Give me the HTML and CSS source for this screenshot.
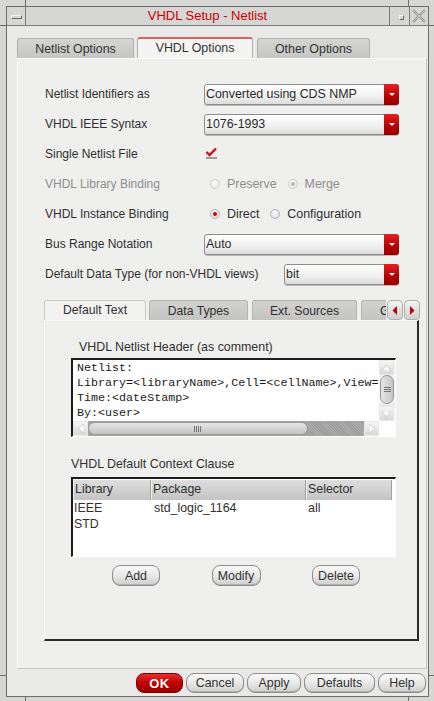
FILE: index.html
```html
<!DOCTYPE html>
<html>
<head>
<meta charset="utf-8">
<link rel="stylesheet" href="styles.css">
</head>
<body>
<div class="ticks">
  <span class="tick tv t-top1"></span><span class="tick tv t-top2"></span>
  <span class="tick tv t-bot1"></span><span class="tick tv t-bot2"></span>
  <span class="tick th2 t-left1"></span><span class="tick th2 t-left2"></span>
  <span class="tick th2 t-right1"></span><span class="tick th2 t-right2"></span>
</div>
<div class="window">
  <div class="titlebar">
    <div class="tb-btn tb-menu"><span class="menu-glyph"></span></div>
    <div class="tb-title">VHDL Setup - Netlist</div>
    <div class="tb-btn tb-max"><span class="max-glyph"></span></div>
    <div class="tb-btn tb-close">
      <svg width="14" height="14" viewBox="0 0 14 14"><path d="M1 1 L13 13 M13 1 L1 13" stroke="#8a8a8a" stroke-width="2.2" fill="none"/><path d="M1 1 L13 13 M13 1 L1 13" stroke="#e4e4e4" stroke-width="0.8" fill="none"/></svg>
    </div>
  </div>
  <div class="content">
    <div class="tabs">
      <div class="tab t1">Netlist Options</div>
      <div class="tab t2 active">VHDL Options</div>
      <div class="tab t3">Other Options</div>
    </div>
    <div class="panel">
      <div class="row">
        <span class="label">Netlist Identifiers as</span>
        <div class="combo"><span class="combo-text">Converted using CDS NMP</span><span class="combo-arrow"></span></div>
      </div>
      <div class="row">
        <span class="label">VHDL IEEE Syntax</span>
        <div class="combo"><span class="combo-text">1076-1993</span><span class="combo-arrow"></span></div>
      </div>
      <div class="row">
        <span class="label lbl-fixed">Single Netlist File</span>
        <svg class="check" width="14" height="12" viewBox="0 0 14 12"><path d="M1.5 5 L4.5 8 L11 1.5" stroke="#d01010" stroke-width="2.4" fill="none"/><path d="M1 11 H12" stroke="#777" stroke-width="1.4"/></svg>
      </div>
      <div class="row">
        <span class="label lbl-fixed disabled">VHDL Library Binding</span>
        <div class="radios">
          <span class="radio dis"></span><span class="rlabel disabled">Preserve</span>
          <span class="radio dis on-dis"></span><span class="rlabel disabled">Merge</span>
        </div>
      </div>
      <div class="row">
        <span class="label lbl-fixed">VHDL Instance Binding</span>
        <div class="radios">
          <span class="radio on"></span><span class="rlabel">Direct</span>
          <span class="radio"></span><span class="rlabel">Configuration</span>
        </div>
      </div>
      <div class="row">
        <span class="label">Bus Range Notation</span>
        <div class="combo"><span class="combo-text">Auto</span><span class="combo-arrow"></span></div>
      </div>
      <div class="row">
        <span class="label">Default Data Type (for non-VHDL views)</span>
        <div class="combo short"><span class="combo-text">bit</span><span class="combo-arrow"></span></div>
      </div>

      <div class="subtabs">
        <div class="subtab-strip">
          <div class="subtab s1 active">Default Text</div>
          <div class="subtab s2">Data Types</div>
          <div class="subtab s3">Ext. Sources</div>
          <div class="subtab s4">Generics</div>
        </div>
        <div class="tab-arrow"><svg width="6" height="9" viewBox="0 0 6 9"><path d="M5 0 L0.5 4.5 L5 9 Z" fill="#c80000"/></svg></div>
        <div class="tab-arrow"><svg width="6" height="9" viewBox="0 0 6 9"><path d="M1 0 L5.5 4.5 L1 9 Z" fill="#c80000"/></svg></div>
      </div>
      <div class="subpanel">
        <div class="sub-label indent">VHDL Netlist Header (as comment)</div>
        <div class="textarea">
          <div class="ta-text">Netlist:
Library=&lt;libraryName&gt;,Cell=&lt;cellName&gt;,View=&lt;viewName&gt;
Time:&lt;dateStamp&gt;
By:&lt;user&gt;</div>
          <div class="vscroll">
            <div class="sb-btn"><svg width="9" height="6" viewBox="0 0 9 6"><path d="M0 6 L4.5 0 L9 6 Z" fill="#fff" stroke="#bbb" stroke-width="0.6"/></svg></div>
            <div class="vthumb"><span class="grip-h"></span></div>
            <div class="vtrough"></div>
            <div class="sb-btn"><svg width="9" height="6" viewBox="0 0 9 6"><path d="M0 0 L4.5 6 L9 0 Z" fill="#fff" stroke="#bbb" stroke-width="0.6"/></svg></div>
          </div>
          <div class="hscroll">
            <div class="sb-btn"><svg width="6" height="9" viewBox="0 0 6 9"><path d="M6 0 L0 4.5 L6 9 Z" fill="#fff" stroke="#bbb" stroke-width="0.6"/></svg></div>
            <div class="hthumb"><span class="grip-v"></span></div>
            <div class="htrough"></div>
            <div class="sb-btn"><svg width="6" height="9" viewBox="0 0 6 9"><path d="M0 0 L6 4.5 L0 9 Z" fill="#fff" stroke="#bbb" stroke-width="0.6"/></svg></div>
          </div>
          <div class="corner"></div>
        </div>
        <div class="sub-label second">VHDL Default Context Clause</div>
        <div class="table">
          <div class="thead">
            <div class="th c1">Library</div>
            <div class="th c2">Package</div>
            <div class="th c3">Selector</div>
            <div class="th c4"></div>
          </div>
          <div class="tr"><div class="td c1">IEEE</div><div class="td c2">std_logic_1164</div><div class="td c3">all</div></div>
          <div class="tr"><div class="td c1">STD</div><div class="td c2"></div><div class="td c3"></div></div>
        </div>
        <div class="tbl-buttons">
          <div class="cell"><button class="btn b-add">Add</button></div>
          <div class="cell"><button class="btn b-mod">Modify</button></div>
          <div class="cell"><button class="btn b-del">Delete</button></div>
        </div>
      </div>
    </div>
    <div class="actions">
      <button class="btn ok">OK</button>
      <button class="btn a-cancel">Cancel</button>
      <button class="btn a-apply">Apply</button>
      <button class="btn a-def">Defaults</button>
      <button class="btn a-help">Help</button>
    </div>
  </div>
</div>
</body>
</html>
```
FILE: styles.css
```css
html, body {
  margin: 0;
  padding: 0;
}
body {
  position: relative;
  width: 434px;
  height: 701px;
  background: #d6d6d4;
  font-family: "Liberation Sans", Arial, sans-serif;
  font-size: 12px;
  color: #303030;
  overflow: hidden;
}
.ticks .tick {
  position: absolute;
  background: #6c6c6c;
}
.tv { width: 1px; height: 6px; }
.th2 { width: 6px; height: 1px; }
.t-top1 { left: 25px; top: 0; }
.t-top2 { left: 408px; top: 0; }
.t-bot1 { left: 25px; top: 696px; }
.t-bot2 { left: 408px; top: 696px; }
.t-left1 { left: 0; top: 25px; }
.t-left2 { left: 0; top: 675px; }
.t-right1 { left: 428px; top: 25px; }
.t-right2 { left: 428px; top: 675px; }
.window {
  margin: 6px 0 0 6px;
  width: 423px;
  height: 691px;
  box-sizing: border-box;
  border: 1px solid #6c6c6c;
  background: #e9e9e7;
}
.titlebar {
  display: flex;
  height: 19px;
  box-sizing: border-box;
  border-bottom: 1px solid #7c7c7c;
  background: #d6d6d4;
}
.tb-btn {
  width: 18px;
  display: flex;
  align-items: center;
  justify-content: center;
}
.tb-menu { border-right: 1px solid #7c7c7c; }
.tb-max { border-left: 1px solid #7c7c7c; border-right: 1px solid #7c7c7c; width: 19px; }
.menu-glyph {
  width: 9px;
  height: 2px;
  border: 1px solid #f4f4f4;
  border-right-color: #6a6a6a;
  border-bottom-color: #6a6a6a;
  margin-top: 1px;
}
.max-glyph {
  width: 3px;
  height: 3px;
  border: 1px solid #f4f4f4;
  border-right-color: #6a6a6a;
  border-bottom-color: #6a6a6a;
  margin-top: 2px;
  margin-left: 3px;
}
.tb-title {
  flex: 1;
  text-align: center;
  color: #cc0000;
  font-size: 13px;
  line-height: 18px;
}
.content {
  padding: 11px 0 0 10px;
}
.tabs {
  display: flex;
  align-items: flex-end;
  height: 21px;
}
.tab {
  height: 20px;
  box-sizing: border-box;
  border: 1px solid #b0b0ae;
  border-bottom: none;
  border-radius: 3px 3px 0 0;
  background: linear-gradient(#d4d4d2, #c6c6c4);
  text-align: center;
  line-height: 20px;
  font-size: 12.4px;
  color: #333;
}
.t1 { width: 117px; }
.t2 { width: 116px; margin-left: 3px; }
.t3 { width: 113px; margin-left: 4px; }
.tab.active {
  height: 21px;
  background: #f4f4f2;
  border-top: 2px solid #e06060;
  line-height: 18px;
}
.panel {
  box-sizing: border-box;
  width: 410px;
  height: 611px;
  border: 1px solid #fafafa;
  border-right-color: #c8c8c6;
  border-bottom-color: #c8c8c6;
  background: #efefed;
  padding: 20px 27px 0 27px;
}
.row {
  height: 30px;
  display: flex;
  align-items: center;
  justify-content: space-between;
}
.label { white-space: nowrap; }
.lbl-fixed { width: 160px; }
.row .check { margin-right: auto; margin-top: -2px; }
.disabled { color: #8e8e8e; }
.combo {
  width: 195px;
  height: 21px;
  box-sizing: border-box;
  border: 1px solid #8c8c8c;
  border-radius: 3px;
  background: linear-gradient(#ffffff, #f0f0f0 60%, #dcdcdc);
  box-shadow: 0 1px 0 #b8b8b8;
  display: flex;
  align-items: center;
}
.combo.short { width: 115px; }
.combo-text {
  flex: 1;
  padding-left: 1px;
  font-size: 12.4px;
  color: #2a2a2a;
  margin-top: -1px;
}
.combo-arrow {
  width: 15px;
  height: 21px;
  margin: -1px -1px -1px 0;
  border-radius: 0 3px 3px 0;
  background: linear-gradient(#e42222, #b40000 60%, #960000);
  position: relative;
}
.combo-arrow::after {
  content: "";
  position: absolute;
  left: 5px;
  top: 9px;
  border-left: 3px solid transparent;
  border-right: 3px solid transparent;
  border-top: 3px solid #ffffff;
}
.radios {
  margin-right: auto;
  display: flex;
  align-items: center;
  margin-left: 5px;
}
.radio {
  width: 10px;
  height: 10px;
  box-sizing: border-box;
  border-radius: 50%;
  border: 1px solid #b4b4b4;
  background: radial-gradient(circle at 40% 35%, #ffffff, #d4d4d4);
  position: relative;
}
.radio.on::after, .radio.on-dis::after {
  content: "";
  position: absolute;
  left: 2px;
  top: 2px;
  width: 4px;
  height: 4px;
  border-radius: 50%;
  background: #d00000;
}
.radio.on-dis::after { background: #b6b6b6; }
.radio.dis { border-color: #d0d0d0; background: radial-gradient(circle at 40% 35%, #fbfbfb, #e4e4e4); }
.rlabel { margin-left: 7px; margin-right: 11px; font-size: 12.4px; }
.subtabs {
  margin-top: 11px;
  margin-left: -1px;
  width: 376px;
  height: 20px;
  display: flex;
  position: relative;
}
.subtab-strip {
  width: 343px;
  display: flex;
  overflow: hidden;
}
.subtab {
  flex: none;
  height: 20px;
  box-sizing: border-box;
  border: 1px solid #b4b4b2;
  border-bottom: none;
  border-radius: 3px 3px 0 0;
  background: linear-gradient(#d2d2d0, #c4c4c2);
  text-align: center;
  line-height: 20px;
  font-size: 12.2px;
}
.subtab.active { background: #f2f2f0; line-height: 18px; border-color: #c8c8c6; }
.s1 { width: 102px; }
.s2 { width: 99px; margin-left: 3px; }
.s3 { width: 105px; margin-left: 4px; }
.s4 { width: 80px; margin-left: 4px; text-align: left; padding-left: 18px; }
.tab-arrow {
  width: 16px;
  height: 20px;
  margin-left: 1px;
  box-sizing: border-box;
  border: 1px solid #b0b0b0;
  border-radius: 4px;
  background: linear-gradient(#f4f4f4, #d0d0d0);
  display: flex;
  align-items: center;
  justify-content: center;
}
.subpanel {
  margin-left: -1px;
  width: 375px;
  height: 321px;
  box-sizing: border-box;
  border: 1px solid #fafafa;
  border-right: 2px solid #2a2a2a;
  border-bottom: 2px solid #2a2a2a;
  background: #efefed;
  padding: 18px 20px 0 26px;
}
.sub-label { line-height: 16px; font-size: 12.4px; }
.sub-label.indent { padding-left: 8px; }
.sub-label.second { margin-top: 19px; }
.textarea {
  margin-top: 3px;
  width: 325px;
  height: 79px;
  box-sizing: border-box;
  border-top: 2px solid #1c1c1c;
  border-left: 2px solid #1c1c1c;
  border-right: 1px solid #ffffff;
  border-bottom: 1px solid #ffffff;
  background: #ffffff;
  display: grid;
  grid-template-columns: 1fr 16px;
  grid-template-rows: 1fr 15px;
}
.ta-text {
  font-family: "Liberation Mono", "Courier New", monospace;
  font-size: 11.7px;
  line-height: 15px;
  white-space: pre;
  overflow: hidden;
  padding: 1px 0 0 4px;
  color: #1a1a1a;
}
.vscroll {
  display: flex;
  flex-direction: column;
  background: #f0f0f0;
}
.sb-btn {
  width: 15px;
  height: 15px;
  flex: none;
  box-sizing: border-box;
  background: linear-gradient(#f6f6f6, #d8d8d8);
  border: 1px solid #e8e8e8;
  display: flex;
  align-items: center;
  justify-content: center;
}
.vthumb {
  height: 27px;
  margin: 0 1px;
  border-radius: 7px;
  border: 1px solid #9a9a9a;
  background: linear-gradient(90deg, #e6e6e6, #c4c4c4);
  display: flex;
  align-items: center;
  justify-content: center;
}
.grip-h {
  width: 7px;
  height: 6px;
  background: repeating-linear-gradient(#777 0 1px, transparent 1px 2px);
}
.vtrough { flex: 1; background: #eaeaea; }
.hscroll {
  display: flex;
  align-items: stretch;
  background: #a4a4a4;
}
.hthumb {
  width: 218px;
  margin: 1px 0;
  border-radius: 7px;
  border: 1px solid #9a9a9a;
  background: linear-gradient(#e6e6e6, #c4c4c4);
  display: flex;
  align-items: center;
  justify-content: center;
}
.grip-v {
  width: 8px;
  height: 6px;
  background: repeating-linear-gradient(90deg, #777 0 1px, transparent 1px 2px);
}
.htrough { flex: 1; background: repeating-linear-gradient(45deg, #9c9c9c 0 1px, #acacac 1px 2px); }
.corner { background: #ffffff; }
.table {
  margin-top: 5px;
  width: 325px;
  height: 80px;
  box-sizing: border-box;
  border-top: 2px solid #1c1c1c;
  border-left: 2px solid #1c1c1c;
  border-right: 1px solid #ffffff;
  border-bottom: 1px solid #ffffff;
  background: #ffffff;
  padding-top: 1px;
}
.thead {
  display: flex;
  height: 20px;
}
.th {
  box-sizing: border-box;
  background: linear-gradient(#dedede, #c4c4c4);
  border-right: 1px solid #a0a0a0;
  border-left: 1px solid #f0f0f0;
  line-height: 19px;
  padding-left: 1px;
  font-size: 12.4px;
}
.th.c4 { border: none; background: #ffffff; flex: 1; }
.c1 { width: 78px; }
.c2 { width: 155px; }
.c3 { width: 86px; }
.tr { display: flex; height: 16px; }
.td {
  line-height: 16px;
  padding-left: 1px;
  box-sizing: border-box;
  font-size: 12.4px;
}
.tr .c2 { padding-left: 3px; }
.tr .c3 { padding-left: 2px; }
.tbl-buttons {
  margin-top: 8px;
  margin-left: 15px;
  display: grid;
  grid-template-columns: 100px 100px 100px;
}
.cell { display: flex; justify-content: center; }
.btn {
  font-family: "Liberation Sans", Arial, sans-serif;
  font-size: 12.4px;
  color: #333;
  height: 21px;
  padding: 0;
  box-sizing: border-box;
  border: 1px solid #8e8e8e;
  border-radius: 8px;
  background: linear-gradient(#fafafa, #e8e8e8 50%, #cfcfcf);
  box-shadow: inset 0 -1px 0 #b0b0b0;
}
.b-add { width: 48px; }
.b-mod { width: 49px; }
.b-del { width: 48px; }
.actions {
  margin-top: 4px;
  display: flex;
  justify-content: flex-end;
  padding-right: 2px;
}
.actions .btn { height: 20px; margin-left: 3px; }
.ok {
  width: 47px;
  color: #ffffff;
  font-weight: bold;
  font-size: 13px;
  letter-spacing: 0.5px;
  border-color: #800000;
  background: linear-gradient(#e83030, #c00000 50%, #9a0000);
  box-shadow: none;
}
.a-cancel { width: 58px; }
.a-apply { width: 54px; }
.a-def { width: 71px; }
.a-help { width: 48px; }
```
